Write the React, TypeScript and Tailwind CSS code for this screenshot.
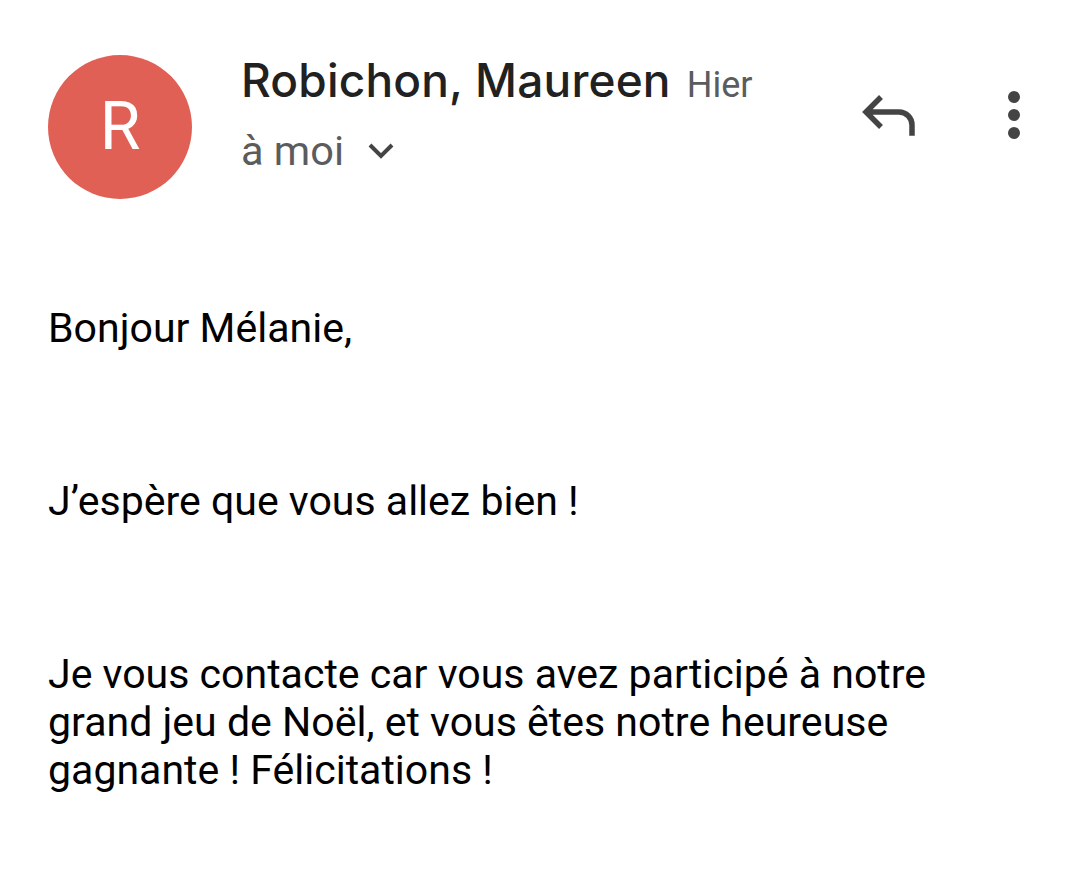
export default function App() {
  return (
    <div className="w-[1070px] h-[880px] bg-white overflow-hidden font-['Roboto',sans-serif]">
      <div className="flex pt-[55px] pl-[48px]">
        <div className="w-[144px] h-[144px] rounded-full bg-[#e06055] flex items-center justify-center text-white text-[66px] font-normal leading-none shrink-0">R</div>
        <div className="ml-[49px] w-[560px]">
          <div className="flex items-baseline h-[50px]">
            <span className="font-['Inter',sans-serif] text-[46px] leading-[50px] font-medium text-[#212121] tracking-[0.17px]">Robichon, Maureen</span>
            <span className="ml-[16px] text-[36px] text-[#5a5c5e]">Hier</span>
          </div>
          <div className="flex items-center mt-[23px]">
            <span className="text-[41.500px] leading-[46px] text-[#5a5c5e]">à moi</span>
            <svg className="ml-[21px] mt-[2px]" width="32" height="20" viewBox="0 0 32 20" fill="none"><path d="M5 3l11 11L27 3" stroke="#444" strokeWidth="4" /></svg>
          </div>
        </div>
        <div className="ml-[59px] mt-[35px]">
          <svg width="60" height="50" viewBox="0 0 60 50" fill="none"><path d="M21 7L6 22l15 15M6 22h33a13 13 0 0 1 13 13v10.700" stroke="#444" strokeWidth="5.500" /></svg>
        </div>
        <div className="ml-[88px] mt-[36px] flex flex-col gap-[6px]">
          <div className="w-[12px] h-[12px] rounded-full bg-[#444]" />
          <div className="w-[12px] h-[12px] rounded-full bg-[#444]" />
          <div className="w-[12px] h-[12px] rounded-full bg-[#444]" />
        </div>
      </div>
      <div className="pl-[48px] mt-[105px] w-[1000px] text-[41.050px] leading-[48px] text-black">
        <p>Bonjour Mélanie,</p>
        <p className="mt-[125px]">J’espère que vous allez bien !</p>
        <p className="mt-[125px]">Je vous contacte car vous avez participé à notre<br />grand jeu de Noël, et vous êtes notre heureuse<br />gagnante ! Félicitations !</p>
      </div>
    </div>
  );
}
